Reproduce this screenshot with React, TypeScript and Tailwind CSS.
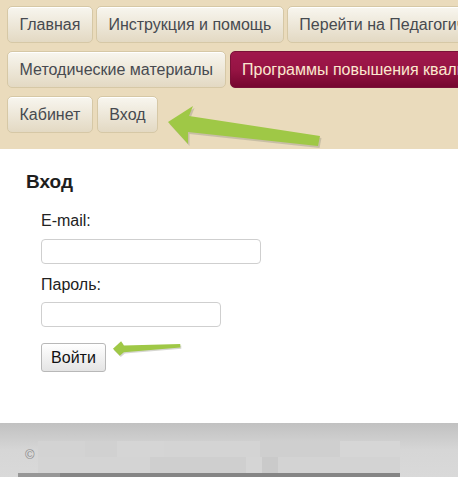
import React from 'react';

const NavButton = ({ label, active = false }: { label: string; active?: boolean }) => (
  <div
    className={
      active
        ? 'h-[37px] px-[11.5px] flex items-center shrink-0 whitespace-nowrap rounded-[5px] border border-[#7a1238] bg-gradient-to-b from-[#a0184c] via-[#971444] to-[#76062f] text-[16px] text-[#fbe8cf]'
        : 'h-[37px] px-[11.5px] flex items-center shrink-0 whitespace-nowrap rounded-[5px] border border-[#d6c8a6] bg-gradient-to-b from-[#f8f6ef] to-[#e3d9c3] text-[16px] text-[#474a50] shadow-[inset_0_1px_0_#ffffff]'
    }
  >
    {label}
  </div>
);

const Arrow = ({ className, points }: { className: string; points: string }) => (
  <svg className={className} viewBox="0 0 160 50" fill="none">
    <polygon points={points} fill="#8a8a7a" opacity="0.35" transform="translate(1.5,2)" />
    <polygon points={points} fill="#9fc846" />
  </svg>
);

export default function App() {
  return (
    <div className="relative w-[458px] h-[477px] overflow-hidden bg-white font-['Liberation_Sans',Arial,sans-serif]">
      {/* Top menu */}
      <div className="h-[149px] bg-[#eadbbc] pt-[6px] pl-[7px] flex flex-col gap-[8px]">
        <div className="flex gap-[3px]">
          <NavButton label="Главная" />
          <NavButton label="Инструкция и помощь" />
          <NavButton label="Перейти на Педагогический портал" />
        </div>
        <div className="flex gap-[4px]">
          <NavButton label="Методические материалы" />
          <NavButton label="Программы повышения квалификации" active />
        </div>
        <div className="flex gap-[4px]">
          <NavButton label="Кабинет" />
          <NavButton label="Вход" />
        </div>
      </div>

      {/* Login form */}
      <div className="h-[274px] bg-white pt-[22px] pl-[26px]">
        <h2 className="text-[19px] leading-[22px] font-bold text-[#1e1e1e]">Вход</h2>
        <div className="pl-[15px] mt-[18px] flex flex-col">
          <label className="text-[16px] leading-[20px] text-[#222]">E-mail:</label>
          <input className="mt-[8px] w-[220px] h-[25px] rounded-[4px] border border-[#cfcfcf] outline-none" />
          <label className="mt-[11px] text-[16px] leading-[20px] text-[#222]">Пароль:</label>
          <input type="password" className="mt-[7px] w-[180px] h-[25px] rounded-[4px] border border-[#cfcfcf] outline-none" />
          <button className="mt-[16px] w-[65px] h-[29px] rounded-[3px] border border-[#b8b8b8] bg-gradient-to-b from-white to-[#e4e4e4] text-[16px] text-[#111]">
            Войти
          </button>
        </div>
      </div>

      {/* Footer */}
      <div className="relative h-[54px] bg-gradient-to-b from-[#c1c1c1] via-[#d6d6d6] to-[#d9d9d9]">
        <div className="absolute left-[38px] top-[18px] flex">
          <div className="w-[47px] h-[16px] bg-[#d3d3d3]" />
          <div className="w-[32px] h-[16px] bg-[#d1d1d1]" />
          <div className="w-[47px] h-[16px] bg-[#d5d5d5]" />
          <div className="w-[96px] h-[16px] bg-[#d4d4d4]" />
          <div className="w-[80px] h-[16px] bg-[#cfcfcf]" />
          <div className="w-[60px] h-[16px] bg-[#d6d6d6]" />
        </div>
        <div className="absolute left-[38px] top-[34px] flex">
          <div className="w-[112px] h-[16px] bg-[#d4d4d4]" />
          <div className="w-[96px] h-[16px] bg-[#cfcfcf]" />
          <div className="w-[16px] h-[16px] bg-[#d5d5d5]" />
          <div className="w-[16px] h-[16px] bg-[#cacaca]" />
          <div className="w-[122px] h-[16px] bg-[#d3d3d3]" />
        </div>
        <span className="absolute left-[25px] top-[22px] text-[13px] text-[#8c8c8c]">©</span>
        <div className="absolute left-[18px] top-[50px] flex">
          <div className="w-[42px] h-[4px] bg-[#979797]" />
          <div className="w-[340px] h-[4px] bg-[#858585]" />
        </div>
      </div>

      {/* Pointer arrows */}
      <Arrow
        className="absolute left-[166px] top-[104px] w-[160px] h-[50px]"
        points="2,18 27,2 23,12 154,32 152,42 22,28 22,40"
      />
      <Arrow
        className="absolute left-[111px] top-[340px] w-[110px] h-[34px]"
        points="2,13 14,2 18,8 101,6 101,11 18,18 12,23"
      />
    </div>
  );
}
